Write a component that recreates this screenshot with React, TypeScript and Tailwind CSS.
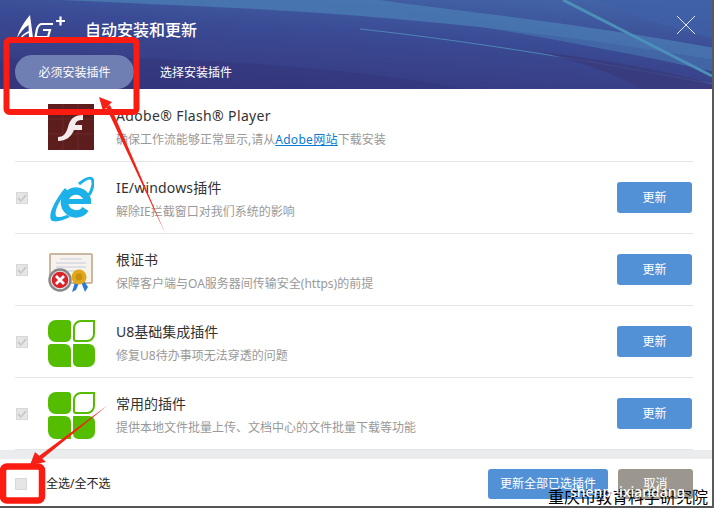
const F = "font-['Noto_Sans','Noto_Sans_CJK_SC',sans-serif]";

function Flash() {
  return (
    <svg width="46" height="46" viewBox="0 0 46 46" className="block">
      <rect width="46" height="46" fill="#5e1d1d" />
      <path d="M0 15H46M0 30H46M15 0V46M30 0V46" stroke="#6a2828" strokeWidth="1" />
      <path d="M35 11C26 11 22 15 20 23C18 30 15 33 10 33L10 37C18 37 23 33 26 26L34 26L34 21L27 21C28 17 30 16 35 16Z" fill="#f4ecec" />
    </svg>
  );
}

function IE() {
  return (
    <svg width="46" height="46" viewBox="0 0 46 46" className="block">
      <g fill="none" stroke="#1cb1e8">
        <path d="M39.5 26A11.5 11.5 0 1 0 37.5 33" strokeWidth="7.5" />
        <path d="M31 8C37 3 42 1 44 3C46 6 45 13 41 19" strokeWidth="3" />
      </g>
      <path d="M17 12C7 24 0 38 3 44C6 47 14 45 22 41L19 39C14 41 9 42 8 40C6 36 11 24 20 15Z" fill="#1cb1e8" />
      <rect x="16" y="23" width="27" height="5" fill="#1cb1e8" />
    </svg>
  );
}

function Cert() {
  return (
    <svg width="46" height="46" viewBox="0 0 46 46" className="block">
      <rect x="2" y="6" width="42" height="29" rx="1" fill="#f7f3ec" stroke="#c9b79f" strokeWidth="2" />
      <path d="M12 11H34M8 15H38M8 19H38M16 23H30" stroke="#c2cbe0" strokeWidth="1.2" />
      <circle cx="12" cy="32" r="10.5" fill="#e8e8e8" stroke="#888" strokeWidth="2.4" />
      <circle cx="12" cy="32" r="8.3" fill="#d8232a" />
      <path d="M8 28L16 36M16 28L8 36" stroke="#fff" strokeWidth="2.8" />
      <path d="M27 34L24 44L28 42L31 35ZM33 34L37 44L40 39L36 33Z" fill="#2b78d8" />
      <circle cx="31" cy="29" r="7.5" fill="#e0a81c" />
      <circle cx="31" cy="29" r="3.4" fill="#c98f10" />
    </svg>
  );
}

function Clover() {
  return (
    <svg width="47" height="47" viewBox="0 0 47 47" className="block">
      <path d="M8 0H20A3 3 0 0 1 23 3V17A5 5 0 0 1 18 22H8A8 8 0 0 1 0 14V8A8 8 0 0 1 8 0Z" fill="#54bd00" />
      <path d="M33 1H46V14A7 7 0 0 1 39 21H28A2 2 0 0 1 26 19V8A7 7 0 0 1 33 1Z" fill="#fff" stroke="#54bd00" strokeWidth="2" />
      <path d="M3 24H17A6 6 0 0 1 23 30V47H8A8 8 0 0 1 0 39V27A3 3 0 0 1 3 24Z" fill="#54bd00" />
      <path d="M25 24H41A6 6 0 0 1 47 30V40A7 7 0 0 1 40 47H30A5 5 0 0 1 25 42Z" fill="#54bd00" />
    </svg>
  );
}

function Check({ on = true }: { on?: boolean }) {
  return (
    <span className="flex h-3 w-3 shrink-0 items-center justify-center border border-[#d8d8d8] bg-[#e6e6e6]">
      {on && (
        <svg width="10" height="10" viewBox="0 0 10 10">
          <path d="M1 5L4 8L9 2" fill="none" stroke="#c8c8c8" strokeWidth="1.8" />
        </svg>
      )}
    </span>
  );
}

function Row({ icon, title, desc, action = true, titleClass = "" }: { icon: React.ReactNode; title: string; desc: React.ReactNode; action?: boolean; titleClass?: string }) {
  return (
    <div className="mx-[15px] flex h-[72px] w-[678px] shrink-0 items-center border-b border-[#e4e4e4] pl-[1px]">
      <div className="w-3 shrink-0">{action && <Check />}</div>
      <div className="ml-5 mt-[3px] w-[46px] shrink-0">{icon}</div>
      <div className="ml-[22px] mt-[4px] min-w-0 flex-1">
        <div className={`text-[14px] leading-[20px] text-[#333] ${titleClass}`}>{title}</div>
        <div className="mt-[5px] text-[12px] leading-[18px] text-[#999]">{desc}</div>
      </div>
      {action && (
        <button className="mr-px h-[31px] w-[75px] rounded-[3px] bg-[#5291d5] text-[12px] text-white">更新</button>
      )}
    </div>
  );
}

function HeaderArt() {
  return (
    <svg className="absolute inset-0" width="715" height="89" viewBox="0 0 715 89" preserveAspectRatio="none">
      <defs>
        <linearGradient id="hd" x1="0" y1="1" x2="0.75" y2="-0.55">
          <stop offset="0" stopColor="#35357a" />
          <stop offset="0.45" stopColor="#3a4a94" />
          <stop offset="1" stopColor="#4a7db8" />
        </linearGradient>
      </defs>
      <rect width="715" height="89" fill="url(#hd)" />
      <path d="M60 0C220 8 420 10 715 60V48C560 20 430 8 380 0Z" fill="#4b7db4" opacity="0.75" />
      <path d="M360 8C480 16 610 36 715 60V72C600 46 470 24 360 8Z" fill="#4672ae" opacity="0.7" />
      <path d="M360 29C480 42 620 66 712 84" fill="none" stroke="#4d86b6" strokeWidth="1" />
      <path d="M563 0L712 76" stroke="#4c90b8" strokeWidth="3" />
      <path d="M600 0H712V38C660 25 620 12 600 0Z" fill="#3f5fa8" opacity="0.7" />
      <path d="M540 52C610 60 670 72 712 84V89H640C610 70 570 60 540 52Z" fill="#3a3a7c" opacity="0.8" />
      <path d="M0 60C120 54 300 60 470 89H0Z" fill="#33357c" opacity="0.55" />
    </svg>
  );
}

function Annotations() {
  return (
    <svg className="absolute inset-0" width="715" height="508" viewBox="0 0 715 508">
      <rect x="6.5" y="40" width="130" height="72" rx="3" fill="none" stroke="#fb1b10" strokeWidth="6" />
      <path d="M165 233L110 105L106 107Z" fill="#f52016" />
      <path d="M99 97L112 102L103 111Z" fill="#f52016" />
      <rect x="3" y="466.5" width="39" height="34" rx="4" fill="none" stroke="#fb1b10" strokeWidth="6.5" />
      <path d="M108 405L39 456L42 459Z" fill="#f52016" />
      <path d="M30 465L35 452L46 462Z" fill="#f52016" />
    </svg>
  );
}

export default function App() {
  return (
    <div className={`relative flex h-[508px] w-[715px] flex-col overflow-hidden bg-white ${F}`}>
      <header className="relative h-[89px] shrink-0 overflow-hidden">
        <HeaderArt />
        <div className="relative flex h-[55px] items-start">
          <svg className="ml-[15px] mt-[13px]" width="52" height="26" viewBox="0 0 52 26">
            <path d="M15 2L18 25H14L13.5 12C9 15 5 20 2 25C4 17 9 9 15 2Z" fill="#fff" />
            <path d="M5 25C8 21 11 19 14 18V20C11 21 8 23 7 25Z" fill="#fff" />
            <path d="M38 11H27C24 11 23 13 22 16L20.5 24H33L35 17H28" fill="none" stroke="#fff" strokeWidth="2.2" />
            <path d="M50 8H41M45.5 3.5V12.5" stroke="#fff" strokeWidth="2.2" />
          </svg>
          <div className="ml-[18px] mt-[19px] text-[16px] font-medium leading-[22px] text-white">自动安装和更新</div>
          <svg className="absolute left-[677px] top-[16px]" width="18" height="18" viewBox="0 0 18 18">
            <path d="M0 0L18 18M18 0L0 18" stroke="#e4e8f2" strokeWidth="1" />
          </svg>
        </div>
        <div className="relative flex items-center pl-[15px]">
          <div className="flex h-[34px] w-[119px] items-center justify-center rounded-[17px] bg-[#6f7eb3] pt-px text-[12px] text-white">必须安装插件</div>
          <div className="ml-[26px] pt-px text-[12px] text-white">选择安装插件</div>
        </div>
      </header>

      <main className="h-[361px] shrink-0 pt-px">
        <Row
          action={false}
          icon={<Flash />}
          title="Adobe® Flash® Player"
          titleClass="tracking-[0.35px]"
          desc={
            <>
              确保工作流能够正常显示,请从<span className="tracking-[0.3px] text-[#0a7ad0] underline">Adobe网站</span>下载安装
            </>
          }
        />
        <Row icon={<IE />} title="IE/windows插件" titleClass="tracking-[0.17px]" desc="解除IE拦截窗口对我们系统的影响" />
        <Row icon={<Cert />} title="根证书" desc="保障客户端与OA服务器间传输安全(https)的前提" />
        <Row icon={<Clover />} title="U8基础集成插件" desc="修复U8待办事项无法穿透的问题" />
        <Row icon={<Clover />} title="常用的插件" desc="提供本地文件批量上传、文档中心的文件批量下载等功能" />
      </main>

      <div className="h-[9px] w-[712px] shrink-0 bg-[#ebecee]" />
      <footer className="flex h-[47px] shrink-0 items-center pl-[15px] pt-[2px]">
        <Check on={false} />
        <span className="ml-[19px] text-[12px] text-[#222]">全选/全不选</span>
        <button className="ml-auto h-[30px] w-[120px] rounded-[3px] bg-[#5291d5] text-[12px] text-white">更新全部已选插件</button>
        <button className="ml-[10px] mr-[22px] h-[30px] w-[75px] rounded-[3px] bg-[#9b978f] text-[12px] text-white">取消</button>
      </footer>
      <div className="h-[2px] w-full shrink-0 bg-[#555]" />

      <Annotations />
      <div className="absolute left-[548px] top-[487px] h-[20px] w-[164px] whitespace-nowrap text-[16px] leading-[20px] text-black">重庆市教育科学研究院</div>
      <div className="absolute left-[570px] top-[484px] text-[14px] font-medium leading-[16px] text-white">shenpeixiandang</div>
      <div className="absolute right-0 top-0 h-full w-[3px] border-l-2 border-[#5a5a5a] bg-white" />
    </div>
  );
}
